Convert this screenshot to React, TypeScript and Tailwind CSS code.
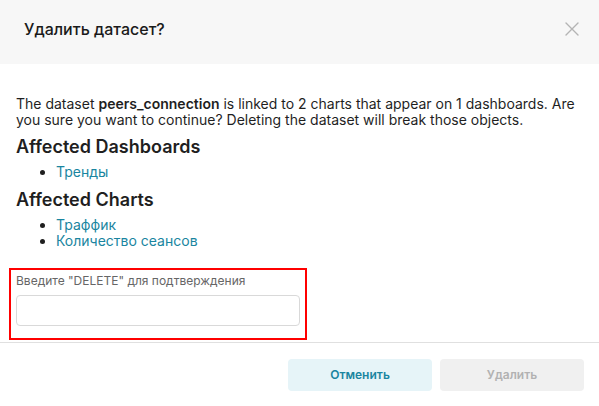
export default function App() {
  return (
    <div className="w-[599px] h-[406px] bg-white flex flex-col font-['Inter','Noto_Sans',sans-serif] text-[#1f1f1f] overflow-hidden">
      <header className="h-16 shrink-0 bg-[#f7f7f7] flex items-center justify-between pl-6 pr-5 pb-[6px]">
        <h2 className="text-[16px] font-medium text-[#1a1a1a]">Удалить датасет?</h2>
        <svg width="14" height="14" viewBox="0 0 14 14" className="text-[#b4b4b4]">
          <path d="M1 1L13 13M13 1L1 13" stroke="currentColor" strokeWidth="1.4" strokeLinecap="round" />
        </svg>
      </header>

      <div className="flex-1 px-4 pt-[32px] text-[14px] leading-4">
        <p>
          The dataset <b className="font-semibold">peers_connection</b> is linked to 2 charts that appear on 1 dashboards. Are
          you sure you want to continue? Deleting the dataset will break those objects.
        </p>
        <h4 className="mt-[6px] text-[18px] leading-[26px] font-semibold">Affected Dashboards</h4>
        <ul className="mt-1 list-disc pl-10 text-[#1a85a0]">
          <li className="marker:text-[#1f1f1f]">Тренды</li>
        </ul>
        <h4 className="mt-[7px] text-[18px] leading-[26px] font-semibold">Affected Charts</h4>
        <ul className="mt-1 list-disc pl-10 text-[#1a85a0]">
          <li className="marker:text-[#1f1f1f]">Траффик</li>
          <li className="marker:text-[#1f1f1f]">Количество сеансов</li>
        </ul>

        <div className="mt-[19px] -ml-[7px] w-[298px] border-2 border-[#ff0000] pl-[5px] pt-[3px] pb-3">
          <label className="block text-[12px] leading-4 text-[#666666]">Введите "DELETE" для подтверждения</label>
          <input className="mt-[6px] w-[284px] h-[31px] rounded border border-[#d9d9d9] bg-white outline-none" />
        </div>
      </div>

      <footer className="h-[64px] shrink-0 border-t border-[#e0e0e0] flex items-center justify-end gap-2 px-[15px]">
        <button className="w-[144px] h-8 rounded bg-[#e6f4f8] text-[12px] font-semibold text-[#1a85a0]">Отменить</button>
        <button className="w-[144px] h-8 rounded bg-[#f0f0f0] text-[12px] font-semibold text-[#b2b2b2]">Удалить</button>
      </footer>
    </div>
  );
}
